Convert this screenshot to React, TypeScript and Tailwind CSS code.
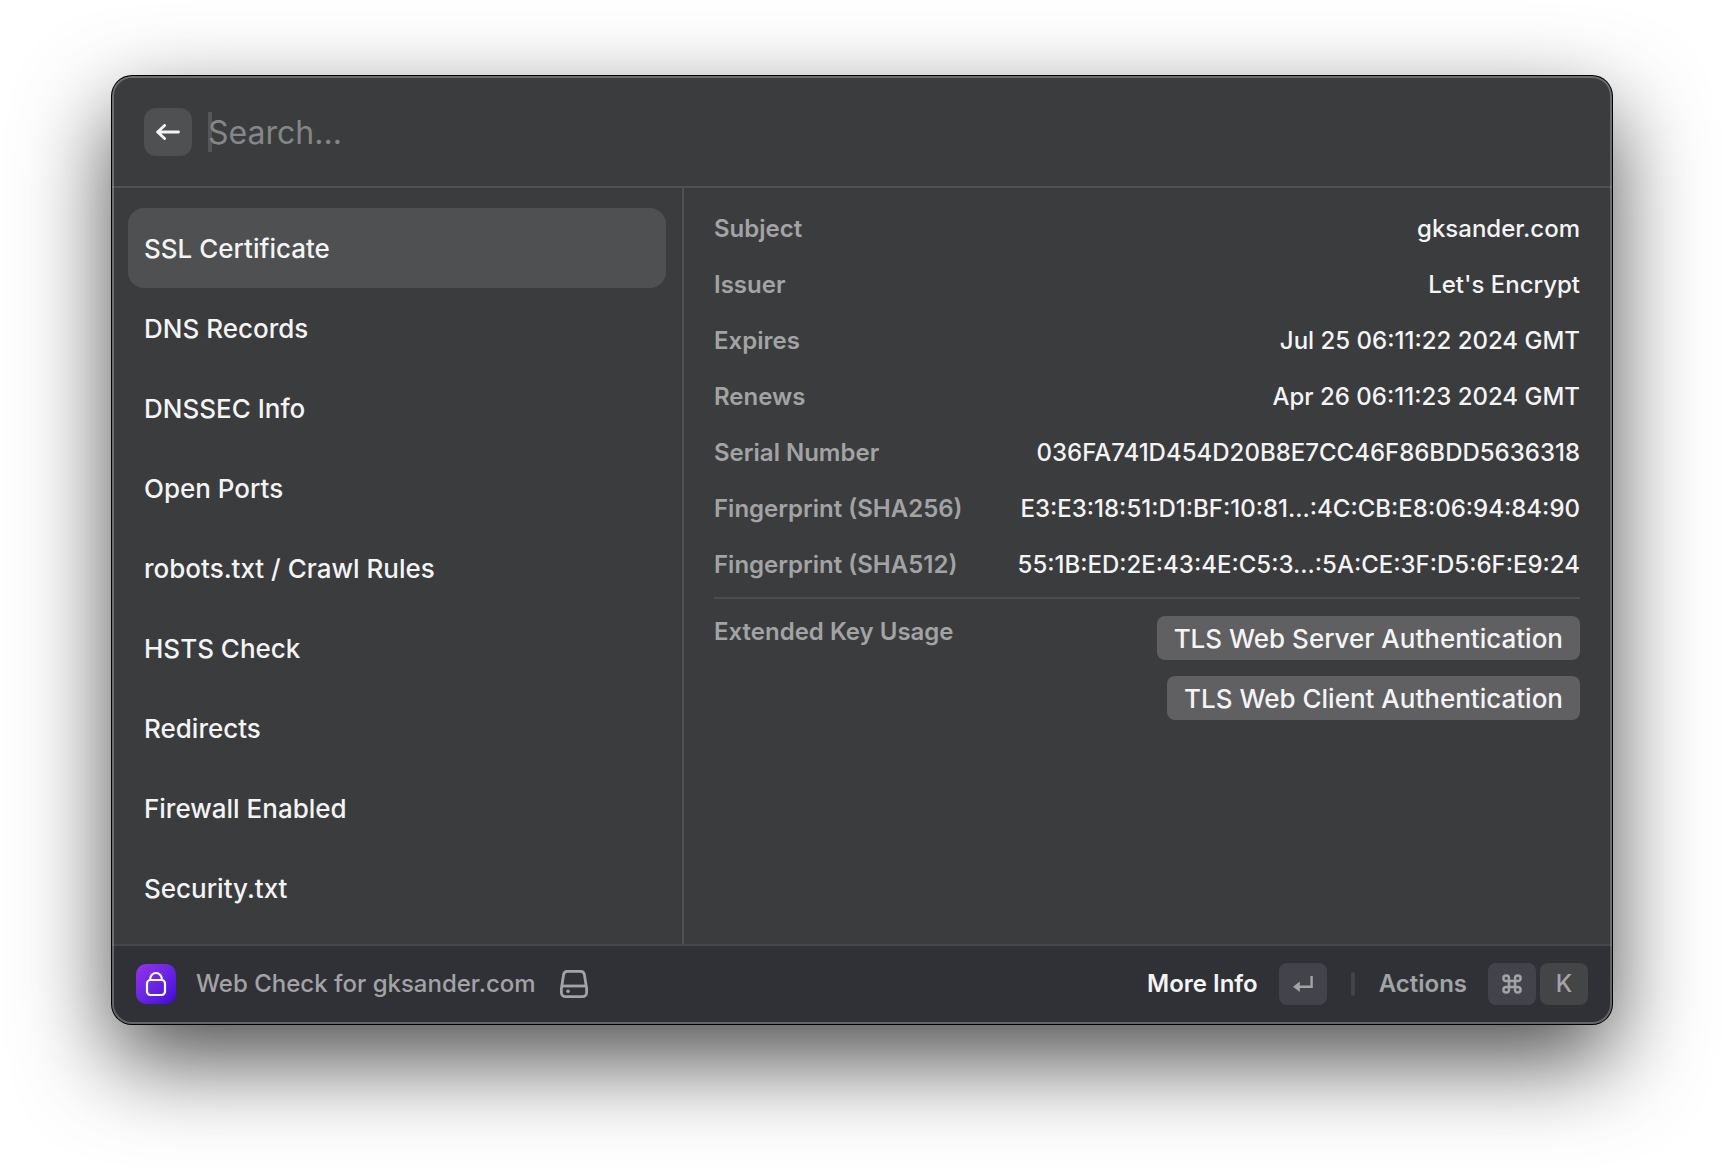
const checks = [
  "SSL Certificate",
  "DNS Records",
  "DNSSEC Info",
  "Open Ports",
  "robots.txt / Crawl Rules",
  "HSTS Check",
  "Redirects",
  "Firewall Enabled",
  "Security.txt",
];

const details = [
  { label: "Subject", value: "gksander.com" },
  { label: "Issuer", value: "Let's Encrypt" },
  { label: "Expires", value: "Jul 25 06:11:22 2024 GMT" },
  { label: "Renews", value: "Apr 26 06:11:23 2024 GMT" },
  { label: "Serial Number", value: "036FA741D454D20B8E7CC46F86BDD5636318" },
  { label: "Fingerprint (SHA256)", value: "E3:E3:18:51:D1:BF:10:81...:4C:CB:E8:06:94:84:90" },
  { label: "Fingerprint (SHA512)", value: "55:1B:ED:2E:43:4E:C5:3...:5A:CE:3F:D5:6F:E9:24" },
];

const keyUsages = ["TLS Web Server Authentication", "TLS Web Client Authentication"];

function BackIcon() {
  return (
    <svg viewBox="0 0 24 16" className="w-6 h-4" fill="none" stroke="currentColor" strokeWidth="2.8" strokeLinecap="round" strokeLinejoin="round">
      <path d="M22.5 8H1.8M8.6 1.4L1.6 8l7 6.6" />
    </svg>
  );
}

function LockIcon() {
  return (
    <svg viewBox="0 0 40 40" className="w-10 h-10" fill="none" stroke="currentColor" strokeWidth="2.2" strokeLinecap="round" strokeLinejoin="round">
      <rect x="11" y="16" width="18" height="15" rx="3.5" />
      <path d="M14.2 16v-1.2a5.8 5.8 0 0 1 11.6 0V16" />
    </svg>
  );
}

function DriveIcon() {
  return (
    <svg viewBox="0 0 28 28" className="w-7 h-7" fill="none" stroke="currentColor" strokeWidth="2.8" strokeLinejoin="round">
      <path d="M1.4 18.5L3.6 4.6a4 4 0 0 1 4-3.2h12.8a4 4 0 0 1 4 3.2l2.2 13.9v4.1a4 4 0 0 1-4 4H5.4a4 4 0 0 1-4-4z" />
      <path d="M1.6 16h24.8" />
      <circle cx="8" cy="21.2" r="1.8" fill="currentColor" stroke="none" />
    </svg>
  );
}

function ReturnIcon() {
  return (
    <svg viewBox="0 0 20 16" className="w-5 h-4" fill="none" stroke="currentColor" strokeWidth="2.4">
      <path d="M18.6 0v10.7H5" />
      <path d="M0 10.7l6.8-5.3v10.6z" fill="currentColor" stroke="none" />
    </svg>
  );
}

function CommandIcon() {
  return (
    <svg viewBox="0 0 20 20" className="w-5 h-5" fill="none" stroke="currentColor" strokeWidth="2.5">
      <path d="M7 7H4.2A2.8 2.8 0 1 1 7 4.2v11.6A2.8 2.8 0 1 1 4.2 13h11.6a2.8 2.8 0 1 1-2.8 2.8V4.2A2.8 2.8 0 1 1 15.8 7z" />
    </svg>
  );
}

export default function App() {
  return (
    <div className="bg-white px-28 pt-[76px] pb-[148px] font-['Inter',sans-serif] font-medium">
      <main className="relative overflow-hidden rounded-[20px] bg-[#3b3c3e] text-[#f4f4f5] shadow-[0_0_0_1px_#000,0_36px_92px_rgba(0,0,0,0.7)]">
        <header className="flex h-28 items-center gap-4 border-b-2 border-[#505153] px-8 pt-0.5">
          <button type="button" aria-label="Back" className="flex size-12 items-center justify-center rounded-xl bg-[#4f5052]">
            <BackIcon />
          </button>
          <div className="relative flex-1">
            <span className="absolute left-0 top-0 h-10 w-1 bg-[#555658]" />
            <input
              type="text"
              aria-label="Search"
              placeholder="Search..."
              className="relative block h-10 w-full bg-transparent pt-0.5 text-[32px] font-normal outline-none placeholder:text-[#858687]"
            />
          </div>
        </header>

        <div className="flex">
          <nav className="w-[572px] shrink-0 border-r-2 border-[#505153] px-4 pt-5 pb-4">
            <ul>
              {checks.map((check, i) => (
                <li key={check}>
                  <button
                    type="button"
                    className={`flex h-20 w-full items-center rounded-2xl px-4 text-left text-[26px] ${i === 0 ? "bg-[#4f5052]" : ""}`}
                  >
                    {check}
                  </button>
                </li>
              ))}
            </ul>
          </nav>

          <section className="min-w-0 flex-1 pt-[13px] pr-8 pl-[30px] text-2xl">
            <dl>
              {details.map((item) => (
                <div key={item.label} className="flex h-14 items-center justify-between">
                  <dt className="font-semibold text-[#a2a3a4]">{item.label}</dt>
                  <dd>{item.value}</dd>
                </div>
              ))}
              <div className="mt-1 flex justify-between border-t-2 border-[#4c4d4f] pt-[17px]">
                <dt className="font-semibold text-[#a2a3a4]">Extended Key Usage</dt>
                <dd className="flex flex-col items-end gap-4">
                  {keyUsages.map((usage) => (
                    <span key={usage} className="flex h-11 items-center rounded-lg bg-[#606062] px-[17px] pt-0.5 text-[26px]">
                      {usage}
                    </span>
                  ))}
                </dd>
              </div>
            </dl>
          </section>
        </div>

        <footer className="flex h-20 items-center justify-between border-t-2 border-[#45464a] bg-[#303136] px-6 pb-0.5 text-2xl text-[#a2a3a6]">
          <div className="flex items-center">
            <span className="mr-5 rounded-[10px] bg-linear-to-br from-[#9333ea] to-[#4300d8] text-white">
              <LockIcon />
            </span>
            <span className="mr-6">Web Check for gksander.com</span>
            <DriveIcon />
          </div>
          <div className="flex items-center gap-6">
            <button type="button" className="flex items-center gap-[21px] font-semibold text-[#f4f4f5]">
              More Info
              <kbd className="flex h-[42px] w-12 items-center justify-center rounded-lg bg-[#43434b] text-[#a2a3a6]">
                <ReturnIcon />
              </kbd>
            </button>
            <span className="h-6 w-1 rounded-full bg-[#434448]" />
            <button type="button" className="flex items-center gap-[21px] font-semibold">
              Actions
              <span className="flex gap-1 font-medium">
                <kbd className="flex h-[42px] w-12 items-center justify-center rounded-lg bg-[#43434b]">
                  <CommandIcon />
                </kbd>
                <kbd className="flex h-[42px] w-12 items-center justify-center rounded-lg bg-[#444547] font-['Inter',sans-serif]">
                  K
                </kbd>
              </span>
            </button>
          </div>
        </footer>

        <div className="pointer-events-none absolute inset-0 rounded-[20px] border-2 border-white/25" />
      </main>
    </div>
  );
}
